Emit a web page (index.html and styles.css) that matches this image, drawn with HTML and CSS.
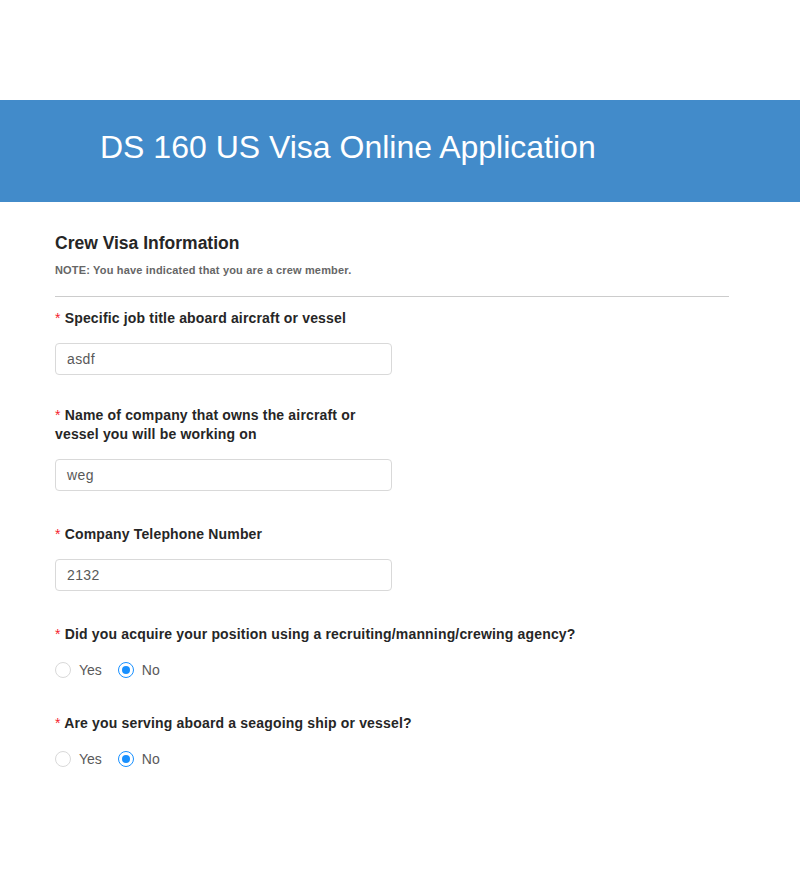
FILE: index.html
```html
<!DOCTYPE html>
<html>
<head>
<meta charset="utf-8">
<link rel="stylesheet" href="styles.css">
</head>
<body>
<div class="top-space"></div>
<header class="banner">
  <h1 class="banner-title">DS 160 US Visa Online Application</h1>
</header>
<main class="content">
  <h2 class="section-title">Crew Visa Information</h2>
  <p class="note">NOTE: You have indicated that you are a crew member.</p>
  <hr class="divider">

  <div class="field field-first">
    <label class="label"><span class="req">*</span> Specific job title aboard aircraft or vessel</label>
    <div class="input">asdf</div>
  </div>

  <div class="field field-tight">
    <label class="label label-narrow"><span class="req">*</span> Name of company that owns the aircraft or vessel you will be working on</label>
    <div class="input">weg</div>
  </div>

  <div class="field">
    <label class="label"><span class="req">*</span> Company Telephone Number</label>
    <div class="input">2132</div>
  </div>

  <div class="field">
    <label class="label"><span class="req">*</span> Did you acquire your position using a recruiting/manning/crewing agency?</label>
    <div class="radios">
      <span class="radio-item"><span class="radio"></span><span class="radio-text">Yes</span></span>
      <span class="radio-item"><span class="radio checked"></span><span class="radio-text">No</span></span>
    </div>
  </div>

  <div class="field field-after-radio">
    <label class="label"><span class="req">*</span> Are you serving aboard a seagoing ship or vessel?</label>
    <div class="radios">
      <span class="radio-item"><span class="radio"></span><span class="radio-text">Yes</span></span>
      <span class="radio-item"><span class="radio checked"></span><span class="radio-text">No</span></span>
    </div>
  </div>
</main>
</body>
</html>
```
FILE: styles.css
```css
* { box-sizing: border-box; }
html, body { margin: 0; padding: 0; background: #fff; }
body { font-family: "Liberation Sans", Arial, sans-serif; color: #262626; }
.top-space { height: 100px; }
.banner {
  height: 102px;
  background: #428bca;
  display: flex;
  align-items: center;
  padding-left: 100px;
}
.banner-title {
  margin: 0;
  font-weight: normal;
  font-size: 32px;
  color: #fff;
  line-height: 1;
  padding-bottom: 8px;
}
.content {
  width: 674px;
  margin-left: 55px;
  padding-top: 30px;
}
.section-title {
  margin: 0;
  font-size: 17.5px;
  font-weight: bold;
  color: #262626;
  line-height: 22px;
}
.note {
  margin: 9px 0 0;
  font-size: 11px;
  font-weight: bold;
  color: #666;
  line-height: 14px;
  letter-spacing: 0.17px;
}
.divider {
  margin: 19px 0 0;
  border: 0;
  border-top: 1px solid #ccc;
}
.field { margin-top: 34px; }
.field-first { margin-top: 12px; }
.field-tight { margin-top: 31px; }
.field-after-radio { margin-top: 36px; }
.label {
  display: block;
  font-size: 14px;
  font-weight: bold;
  line-height: 19px;
  color: #262626;
  letter-spacing: 0.17px;
}
.label-narrow { width: 320px; }
.req { color: #f5222d; font-weight: normal; }
.input {
  margin-top: 15px;
  width: 337px;
  height: 32px;
  border: 1px solid #d9d9d9;
  border-radius: 4px;
  padding: 0 11px;
  font-size: 14px;
  line-height: 30px;
  color: #595959;
  letter-spacing: 0.4px;
}
.radios {
  margin-top: 18px;
  display: flex;
  gap: 16px;
  height: 16px;
  align-items: center;
}
.radio-item { display: flex; align-items: center; }
.radio {
  width: 16px;
  height: 16px;
  border: 1px solid #d9d9d9;
  border-radius: 50%;
  position: relative;
  background: #fff;
}
.radio.checked { border-color: #1890ff; }
.radio.checked::after {
  content: "";
  position: absolute;
  left: 3px;
  top: 3px;
  width: 8px;
  height: 8px;
  border-radius: 50%;
  background: #1890ff;
}
.radio-text {
  margin-left: 8px;
  font-size: 14px;
  color: #595959;
  line-height: 16px;
}
```
